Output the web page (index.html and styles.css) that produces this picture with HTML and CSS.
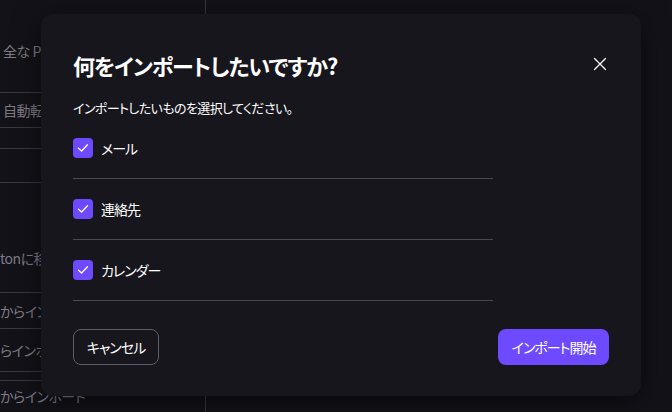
FILE: index.html
```html
<!DOCTYPE html>
<html lang="ja">
<head>
<meta charset="utf-8">
<link rel="stylesheet" href="styles.css">
</head>
<body>
<div class="page">
  <aside class="settings">
    <div class="row r1"><span class="bg-text">全な Proton</span></div>
    <div class="row r2"><span class="bg-text">自動転送</span></div>
    <div class="row r3"></div>
    <div class="row r4"></div>
    <div class="row r5"><span class="bg-text">tonに移行</span></div>
    <div class="row r6"><span class="bg-text">からインポート</span></div>
    <div class="row r7"><span class="bg-text">らインポート</span></div>
    <div class="row r8"></div>
    <div class="row r9"><span class="bg-text">からインポート</span></div>
  </aside>
  <main class="content"></main>
</div>

<div class="modal" role="dialog">
  <div class="modal-header">
    <h2 class="modal-title">何をインポートしたいですか?</h2>
    <button class="close" aria-label="閉じる">
      <svg width="14" height="14" viewBox="0 0 14 14"><path d="M1.5 1.5 L12.5 12.5 M12.5 1.5 L1.5 12.5" stroke="#fff" stroke-width="1.3" fill="none" stroke-linecap="round"/></svg>
    </button>
  </div>
  <p class="modal-sub">インポートしたいものを選択してください。</p>
  <ul class="options">
    <li class="option"><span class="check"><svg width="12" height="10" viewBox="0 0 12 10"><path d="M1.5 5.2 L4.6 8 L10.5 1.8" stroke="#fff" stroke-width="1.3" fill="none" stroke-linecap="round" stroke-linejoin="round"/></svg></span><span class="label">メール</span></li>
    <li class="option"><span class="check"><svg width="12" height="10" viewBox="0 0 12 10"><path d="M1.5 5.2 L4.6 8 L10.5 1.8" stroke="#fff" stroke-width="1.3" fill="none" stroke-linecap="round" stroke-linejoin="round"/></svg></span><span class="label">連絡先</span></li>
    <li class="option"><span class="check"><svg width="12" height="10" viewBox="0 0 12 10"><path d="M1.5 5.2 L4.6 8 L10.5 1.8" stroke="#fff" stroke-width="1.3" fill="none" stroke-linecap="round" stroke-linejoin="round"/></svg></span><span class="label">カレンダー</span></li>
  </ul>
  <div class="modal-footer">
    <button class="btn btn-ghost">キャンセル</button>
    <button class="btn btn-primary">インポート開始</button>
  </div>
</div>
</body>
</html>
```
FILE: styles.css
```css
* { box-sizing: border-box; }
html, body { margin: 0; padding: 0; }
body {
  width: 672px;
  height: 412px;
  overflow: hidden;
  background: #131218;
  font-family: "Noto Sans CJK JP", "Noto Sans", sans-serif;
  font-feature-settings: "palt";
  color: #fff;
  position: relative;
}
.page {
  display: flex;
  height: 412px;
}
.settings {
  width: 206px;
  border-right: 1px solid #3a3942;
  display: flex;
  flex-direction: column;
  overflow: hidden;
}
.row {
  flex: none;
  display: flex;
  align-items: center;
  border-bottom: 1px solid #3a3942;
  white-space: nowrap;
}
.bg-text {
  font-size: 14px;
  color: #7e7c86;
  padding-left: 3px;
  letter-spacing: -0.5px;
}
.r1 { height: 93px; padding-top: 10px; }
.r2 { height: 35px; }
.r3 { height: 21px; }
.r4 { height: 34px; }
.r5 { height: 110px; padding-top: 40px; }
.r6 { height: 36px; }
.r7 { height: 43px; }
.r8 { height: 9px; }
.r9 { height: 36px; border-bottom: 0; padding-bottom: 6px; }
.r5 .bg-text, .r6 .bg-text, .r7 .bg-text, .r9 .bg-text { padding-left: 0; }
.content { flex: 1; }

.modal {
  position: absolute;
  left: 41px;
  top: 14px;
  width: 600px;
  background: #17161d;
  border-radius: 12px;
  padding: 35px 32px 31px 32px;
  box-shadow: 0 6px 28px rgba(0, 0, 0, 0.55);
}
.modal-header {
  display: flex;
  justify-content: space-between;
  align-items: flex-start;
}
.modal-title {
  margin: 0;
  font-size: 22px;
  line-height: 32px;
  font-weight: 700;
  letter-spacing: -1px;
}
.close {
  width: 24px;
  height: 24px;
  margin: 3px -3px 0 0;
  background: none;
  border: 0;
  padding: 0;
  display: flex;
  align-items: center;
  justify-content: center;
}
.modal-sub {
  margin: 17px 0 0 0;
  font-size: 13px;
  line-height: 20px;
  letter-spacing: -0.6px;
}
.options {
  list-style: none;
  margin: 0;
  padding: 0;
  width: 420px;
}
.option {
  display: flex;
  align-items: center;
  gap: 8px;
  padding: 20px 0;
  border-bottom: 1px solid #4a4953;
}
.check {
  width: 20px;
  height: 20px;
  border-radius: 4px;
  background: #6d4aff;
  display: flex;
  align-items: center;
  justify-content: center;
}
.label {
  font-size: 14px;
  line-height: 20px;
  letter-spacing: -1px;
}
.modal-footer {
  margin-top: 28px;
  display: flex;
  justify-content: space-between;
}
.btn {
  height: 36px;
  border-radius: 8px;
  font-family: inherit;
  font-feature-settings: "palt";
  font-size: 14px;
  letter-spacing: -1px;
  white-space: nowrap;
  color: #fff;
  padding: 0;
  cursor: pointer;
}
.btn-ghost {
  background: transparent;
  border: 1px solid #5e5c68;
  width: 86px;
}
.btn-primary {
  background: #6d4aff;
  border: 0;
  width: 111px;
}
```
